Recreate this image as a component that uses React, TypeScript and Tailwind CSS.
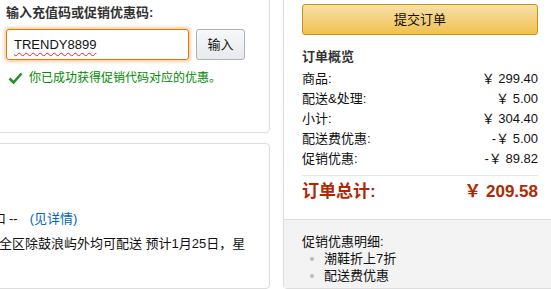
import React from 'react';

const rows = [
  { label: '商品:', value: '￥ 299.40' },
  { label: '配送&处理:', value: '￥ 5.00' },
  { label: '小计:', value: '￥ 304.40' },
  { label: '配送费优惠:', value: '-￥ 5.00' },
  { label: '促销优惠:', value: '-￥ 89.82' },
];

const CheckIcon = () => (
  <svg width="15" height="12" viewBox="0 0 15 12" className="shrink-0">
    <path d="M1.5 6.5 L5.5 10.5 L13.5 1.5" fill="none" stroke="#2a8f2a" strokeWidth="2.6" />
  </svg>
);

export default function App() {
  return (
    <div className="w-[551px] h-[289px] overflow-hidden bg-white flex font-['Liberation_Sans','Noto_Sans_CJK_SC',sans-serif] text-[13px] text-[#111]">
      {/* Left column */}
      <div className="-ml-[12px] w-[282px] shrink-0 flex flex-col">
        <div className="-mt-[10px] h-[143px] border border-[#ddd] rounded-[4px] pl-[17px] pt-[12px] flex flex-col">
          <div className="leading-[20px] font-bold text-[#333]">输入充值码或促销优惠码:</div>
          <div className="mt-[6px] flex gap-[7px]">
            <div className="w-[183px] h-[31px] border border-[#e77600] rounded-[3px] shadow-[0_0_3px_2px_rgba(228,121,17,0.35)] flex items-center pl-[7px]">
              <span className="text-[13px] text-[#111] underline decoration-wavy decoration-[#e22] decoration-1 underline-offset-[3px]">TRENDY8899</span>
            </div>
            <button className="w-[49px] h-[31px] border border-[#adb1b8] rounded-[3px] bg-gradient-to-b from-[#f7f8fa] to-[#e7e9ec] text-[13px] text-[#111] flex items-center justify-center">
              输入
            </button>
          </div>
          <div className="mt-[8px] flex items-center gap-[6px] leading-[20px] pl-[2px]">
            <CheckIcon />
            <span className="text-[12px] text-[#008a00]">你已成功获得促销代码对应的优惠。</span>
          </div>
        </div>
        <div className="mt-[10px] flex-1 border border-[#ddd] rounded-[4px] pt-[65px] pl-[11px] overflow-hidden">
          <div className="leading-[20px] whitespace-nowrap flex">
            <span className="-ml-[7px]">口</span>
            <span className="ml-[3px]">--</span>
            <span className="ml-[12px] text-[#0066c0]">(见详情)</span>
          </div>
          <div className="mt-[5px] leading-[20px] whitespace-nowrap -ml-[1px]">全区除鼓浪屿外均可配送 预计1月25日，星</div>
        </div>
      </div>

      {/* Right column */}
      <div className="ml-[13px] -mt-[10px] w-[274px] shrink-0 border border-[#ddd] rounded-[4px] flex flex-col">
        <div className="px-[18px] pt-[13px] pb-[15px] border-b border-[#ddd]">
          <button className="w-full h-[31px] border border-[#c89411] rounded-[3px] bg-gradient-to-b from-[#f7dfa5] to-[#f0c14b] text-[13px] text-[#111] flex items-center justify-center">
            提交订单
          </button>
          <div className="mt-[12px] leading-[20px] font-bold text-[#333]">订单概览</div>
          <div className="mt-[2px] flex flex-col">
            {rows.map((r) => (
              <div key={r.label} className="flex justify-between leading-[20px]">
                <span>{r.label}</span>
                <span>{r.value}</span>
              </div>
            ))}
          </div>
          <div className="mt-[6px] h-px bg-[#e7e7e7]" />
          <div className="mt-[4px] flex justify-between leading-[24px] text-[17px] font-bold text-[#b12704]">
            <span>订单总计:</span>
            <span>￥ 209.58</span>
          </div>
        </div>
        <div className="flex-1 bg-[#f3f3f3] px-[18px] pt-[13px] leading-[17px]">
          <div>促销优惠明细:</div>
          <ul className="flex flex-col">
            {['潮鞋折上7折', '配送费优惠'].map((t) => (
              <li key={t} className="flex items-center">
                <span className="ml-[8px] w-[4px] h-[4px] rounded-full bg-[#bbb]" />
                <span className="ml-[10px]">{t}</span>
              </li>
            ))}
          </ul>
        </div>
      </div>
    </div>
  );
}
